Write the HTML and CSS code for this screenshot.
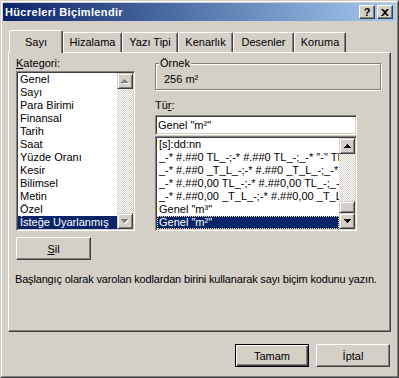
FILE: index.html
```html
<!DOCTYPE html>
<html>
  <head>
    <title>Hücreleri Biçimlendir</title>
    <link rel="stylesheet" href="styles.css">
  </head>
  <body>
    <div class="window">
      <div class="window-frame">
        <!-- Title bar -->
        <div class="titlebar">
          <span class="title">Hücreleri Biçimlendir</span>
          <div class="cap-buttons">
            <button class="cap-btn cap-help">?</button>
            <button class="cap-btn">
              <svg width="8" height="7" viewBox="0 0 8 7"><path d="M0 0h2l2 2 2-2h2L5 3.5 8 7H6L4 5 2 7H0l3-3.5z" fill="#000"/></svg>
            </button>
          </div>
        </div>

        <div class="dialog-body">
          <!-- Tabs -->
          <div class="tabs">
            <div class="tab active">Sayı</div>
            <div class="tab">Hizalama</div>
            <div class="tab">Yazı Tipi</div>
            <div class="tab">Kenarlık</div>
            <div class="tab">Desenler</div>
            <div class="tab">Koruma</div>
          </div>

          <div class="tab-panel">
            <div class="panel-grid">
              <div class="left-col">
                <div class="field-label"><u>K</u>ategori:</div>
                <div class="listbox category-list">
                  <div class="list-items">
                    <div class="list-item">Genel</div>
                    <div class="list-item">Sayı</div>
                    <div class="list-item">Para Birimi</div>
                    <div class="list-item">Finansal</div>
                    <div class="list-item">Tarih</div>
                    <div class="list-item">Saat</div>
                    <div class="list-item">Yüzde Oranı</div>
                    <div class="list-item">Kesir</div>
                    <div class="list-item">Bilimsel</div>
                    <div class="list-item">Metin</div>
                    <div class="list-item">Özel</div>
                    <div class="list-item selected">İsteğe Uyarlanmış</div>
                  </div>
                  <div class="scrollbar">
                    <div class="sb-btn disabled">
                      <svg width="8" height="5" viewBox="0 0 8 5"><path d="M4 1h1v1h1v1h1v1h1v1H2V4h1V3h1z" fill="#fff"/><path d="M3 0h1v1h1v1h1v1h1v1H0V3h1V2h1V1h1z" fill="#808080"/></svg>
                    </div>
                    <div class="sb-track"></div>
                    <div class="sb-btn disabled">
                      <svg width="8" height="5" viewBox="0 0 8 5"><path d="M1 1h7v1H7v1H6v1H5v1H4V4H3V3H2V2H1z" fill="#fff"/><path d="M0 0h7v1H6v1H5v1H4v1H3V3H2V2H1V1H0z" fill="#808080"/></svg>
                    </div>
                  </div>
                </div>
                <button class="button sil-button"><u>S</u>il</button>
              </div>

              <div class="right-col">
                <div class="groupbox">
                  <div class="groupbox-label">Örnek</div>
                  <div class="groupbox-value">256 m²</div>
                </div>
                <div class="field-label type-label">Tü<u>r</u>:</div>
                <div class="textbox">Genel "m²"</div>
                <div class="listbox format-list">
                  <div class="list-items">
                    <div class="list-item">[s]:dd:nn</div>
                    <div class="list-item">_-* #.##0 TL_-;-* #.##0 TL_-;_-* "-" TL_-;_-@_-</div>
                    <div class="list-item">_-* #.##0 _T_L_-;-* #.##0 _T_L_-;_-* "-" _T_L_-;_-@_-</div>
                    <div class="list-item">_-* #.##0,00 TL_-;-* #.##0,00 TL_-;_-* "-"?? TL_-;_-@_-</div>
                    <div class="list-item">_-* #.##0,00 _T_L_-;-* #.##0,00 _T_L_-;_-* "-"?? _T_L_-;_-@_-</div>
                    <div class="list-item">Genel "m³"</div>
                    <div class="list-item selected focused">Genel "m²"</div>
                  </div>
                  <div class="scrollbar">
                    <div class="sb-btn">
                      <svg width="7" height="4" viewBox="0 0 7 4"><path d="M3 0h1v1h1v1h1v1h1v1H0V3h1V2h1V1h1z" fill="#000"/></svg>
                    </div>
                    <div class="sb-track"></div>
                    <div class="sb-thumb"></div>
                    <div class="sb-btn">
                      <svg width="7" height="4" viewBox="0 0 7 4"><path d="M0 0h7v1H6v1H5v1H4v1H3V3H2V2H1V1H0z" fill="#000"/></svg>
                    </div>
                  </div>
                </div>
              </div>
            </div>

            <p class="hint">Başlangıç olarak varolan kodlardan birini kullanarak sayı biçim kodunu yazın.</p>
          </div>

          <!-- Dialog buttons -->
          <div class="dialog-buttons">
            <button class="button default-button">Tamam</button>
            <button class="button">İptal</button>
          </div>
        </div>
      </div>
    </div>
  </body>
</html>
```

FILE: styles.css
```css
/* Page */
body {
  margin: 0;
  font-family: "Liberation Sans", Arial, sans-serif;
  font-size: 11px;
  color: #000;
  background-color: #D4D0C8;
}

u {
  text-decoration: underline;
  text-underline-offset: 1px;
}

/* Window frame */
.window {
  width: 399px;
  height: 378px;
  box-sizing: border-box;
  border: 1px solid;
  border-color: #D4D0C8 #404040 #404040 #D4D0C8;
  background-color: #D4D0C8;
}

.window-frame {
  height: 100%;
  box-sizing: border-box;
  border: 1px solid;
  border-color: #fff #808080 #808080 #fff;
  padding: 1px;
}

/* Title bar */
.titlebar {
  height: 18px;
  display: flex;
  align-items: center;
  justify-content: space-between;
  padding: 0 3px 0 2px;
  background: linear-gradient(to right, #0A246A, #A6CAF0);
}

.title {
  color: #fff;
  font-weight: bold;
  letter-spacing: 0.35px;
}

.cap-buttons {
  display: flex;
  gap: 2px;
}

.cap-btn {
  width: 16px;
  height: 14px;
  box-sizing: border-box;
  padding: 0;
  border: 1px solid;
  border-color: #fff #404040 #404040 #fff;
  box-shadow: inset -1px -1px #808080;
  background-color: #D4D0C8;
  display: flex;
  align-items: center;
  justify-content: center;
  font-family: "Liberation Sans", Arial, sans-serif;
  font-weight: bold;
  font-size: 11px;
  line-height: 11px;
}

/* Dialog body */
.dialog-body {
  padding: 9px 5px 0 5px;
}

/* Tabs */
.tabs {
  display: flex;
  align-items: flex-end;
  height: 22px;
  padding-left: 1px;
}

.tab {
  height: 20px;
  box-sizing: border-box;
  padding-top: 3px;
  line-height: 13px;
  text-align: center;
  border: 1px solid;
  border-bottom: none;
  border-color: #fff #404040 transparent #fff;
  box-shadow: inset -1px 0 #808080;
  border-radius: 2px 2px 0 0;
}

.tab:nth-child(1) { width: 54px; }
.tab:nth-child(2) { width: 59px; }
.tab:nth-child(3) { width: 56px; }
.tab:nth-child(4) { width: 55px; }
.tab:nth-child(5) { width: 61px; }
.tab:nth-child(6) { width: 52px; }

.tab.active {
  height: 23px;
  padding-top: 5px;
  margin-bottom: -1px;
  position: relative;
  z-index: 1;
  background-color: #D4D0C8;
}

.tab-panel {
  height: 280px;
  box-sizing: border-box;
  border: 1px solid;
  border-color: #fff #404040 #404040 #fff;
  box-shadow: inset -1px -1px #808080;
  padding: 4px 0 0 7px;
}

.panel-grid {
  display: grid;
  grid-template-columns: 119px 226px;
  column-gap: 20px;
}

.field-label {
  height: 13px;
  line-height: 13px;
  margin-bottom: 1px;
}

/* List boxes */
.listbox {
  display: flex;
  box-sizing: border-box;
  border: 1px solid;
  border-color: #808080 #fff #fff #808080;
  padding: 1px;
  box-shadow: inset 1px 1px #404040, inset -1px -1px #D4D0C8;
  background-color: #fff;
}

.category-list {
  height: 160px;
}

.format-list {
  width: 202px;
  height: 95px;
  margin-top: 1px;
}

.list-items {
  flex: 1;
  min-width: 0;
  overflow: hidden;
}

.list-item {
  height: 13px;
  line-height: 13px;
  padding-left: 2px;
  white-space: nowrap;
  overflow: hidden;
}

.list-item.selected {
  background-color: #0A246A;
  color: #fff;
}

.list-item.focused {
  box-sizing: border-box;
  border: 1px dotted #F5DB95;
  padding-left: 1px;
  line-height: 11px;
}

/* Scrollbars */
.scrollbar {
  width: 16px;
  display: flex;
  flex-direction: column;
}

.sb-track {
  flex: 1;
  background: repeating-conic-gradient(#D4D0C8 0% 25%, #fff 0% 50%) 0 0 / 2px 2px;
}

.sb-btn,
.sb-thumb {
  box-sizing: border-box;
  border: 1px solid;
  border-color: #D4D0C8 #404040 #404040 #D4D0C8;
  box-shadow: inset 1px 1px #fff, inset -1px -1px #808080;
  background-color: #D4D0C8;
}

.sb-btn {
  height: 16px;
  display: flex;
  align-items: center;
  justify-content: center;
}

.sb-thumb {
  height: 12px;
}

/* Buttons */
.button {
  width: 74px;
  height: 23px;
  box-sizing: border-box;
  padding: 0;
  border: 1px solid;
  border-color: #fff #404040 #404040 #fff;
  box-shadow: inset -1px -1px #808080;
  background-color: #D4D0C8;
  font-family: "Liberation Sans", Arial, sans-serif;
  font-size: 11px;
  color: #000;
}

.sil-button {
  display: block;
  width: 75px;
  margin-top: 6px;
}

.default-button {
  border-color: #000;
  box-shadow: inset 1px 1px #fff, inset -1px -1px #404040, inset -2px -2px #808080;
}

/* Sample group box */
.groupbox {
  height: 27px;
  box-sizing: border-box;
  margin-top: 6px;
  border: 1px solid #808080;
  box-shadow: inset 1px 1px #fff, 1px 1px #fff;
}

.groupbox-label {
  width: fit-content;
  margin: -7px 0 0 3px;
  padding: 0 1px;
  line-height: 13px;
  background-color: #D4D0C8;
}

.groupbox-value {
  margin-top: 3px;
  padding-left: 8px;
  line-height: 13px;
}

.type-label {
  margin-top: 9px;
  margin-bottom: 3px;
}

.textbox {
  width: 202px;
  height: 20px;
  box-sizing: border-box;
  border: 1px solid;
  border-color: #808080 #fff #fff #808080;
  box-shadow: inset 1px 1px #404040, inset -1px -1px #D4D0C8;
  background-color: #fff;
  padding-left: 2px;
  line-height: 18px;
}

/* Hint text */
.hint {
  margin: 13px 0 0 -1px;
  line-height: 13px;
  letter-spacing: -0.17px;
}

/* Bottom buttons */
.dialog-buttons {
  display: flex;
  justify-content: flex-end;
  gap: 7px;
  margin-top: 12px;
  padding-right: 1px;
}
```
